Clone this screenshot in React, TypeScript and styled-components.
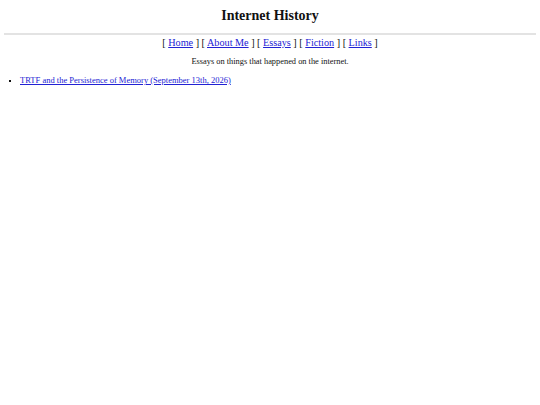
import styled, { createGlobalStyle } from "styled-components";

const GlobalStyle = createGlobalStyle`
  body {
    margin: 4px;
    background: #fff;
    font-family: "Liberation Serif", "Times New Roman", serif;
    color: #111;
  }
`;

const Title = styled.h1`
  font-size: 14px;
  line-height: 16px;
  font-weight: bold;
  text-align: center;
  margin: 4px 0 9px;
`;

const Rule = styled.hr`
  border: none;
  height: 2px;
  background: #e3e3e3;
  margin: 0;
`;

const Nav = styled.nav`
  text-align: center;
  font-size: 10.2px;
  line-height: 12px;
  margin: 2px 0 0;

  a {
    color: #2222d4;
  }
`;

const Tagline = styled.p`
  text-align: center;
  font-size: 8.4px;
  line-height: 10px;
  margin: 8px 0 0;
`;

const EssayList = styled.ul`
  list-style: square;
  font-size: 8.5px;
  line-height: 10px;
  margin: 8px 0 0;
  padding-left: 16px;

  li::marker {
    font-size: 7.5px;
  }

  a {
    color: #2222d4;
  }
`;

const links = ["Home", "About Me", "Essays", "Fiction", "Links"];

export default function App() {
  return (
    <>
      <GlobalStyle />
      <Title>Internet History</Title>
      <Rule />
      <Nav>
        {links.map((l, i) => (
          <span key={l}>
            {i > 0 && " "}[ <a href="#">{l}</a> ]
          </span>
        ))}
      </Nav>
      <Tagline>Essays on things that happened on the internet.</Tagline>
      <EssayList>
        <li>
          <a href="#">TRTF and the Persistence of Memory (September 13th, 2026)</a>
        </li>
      </EssayList>
    </>
  );
}
